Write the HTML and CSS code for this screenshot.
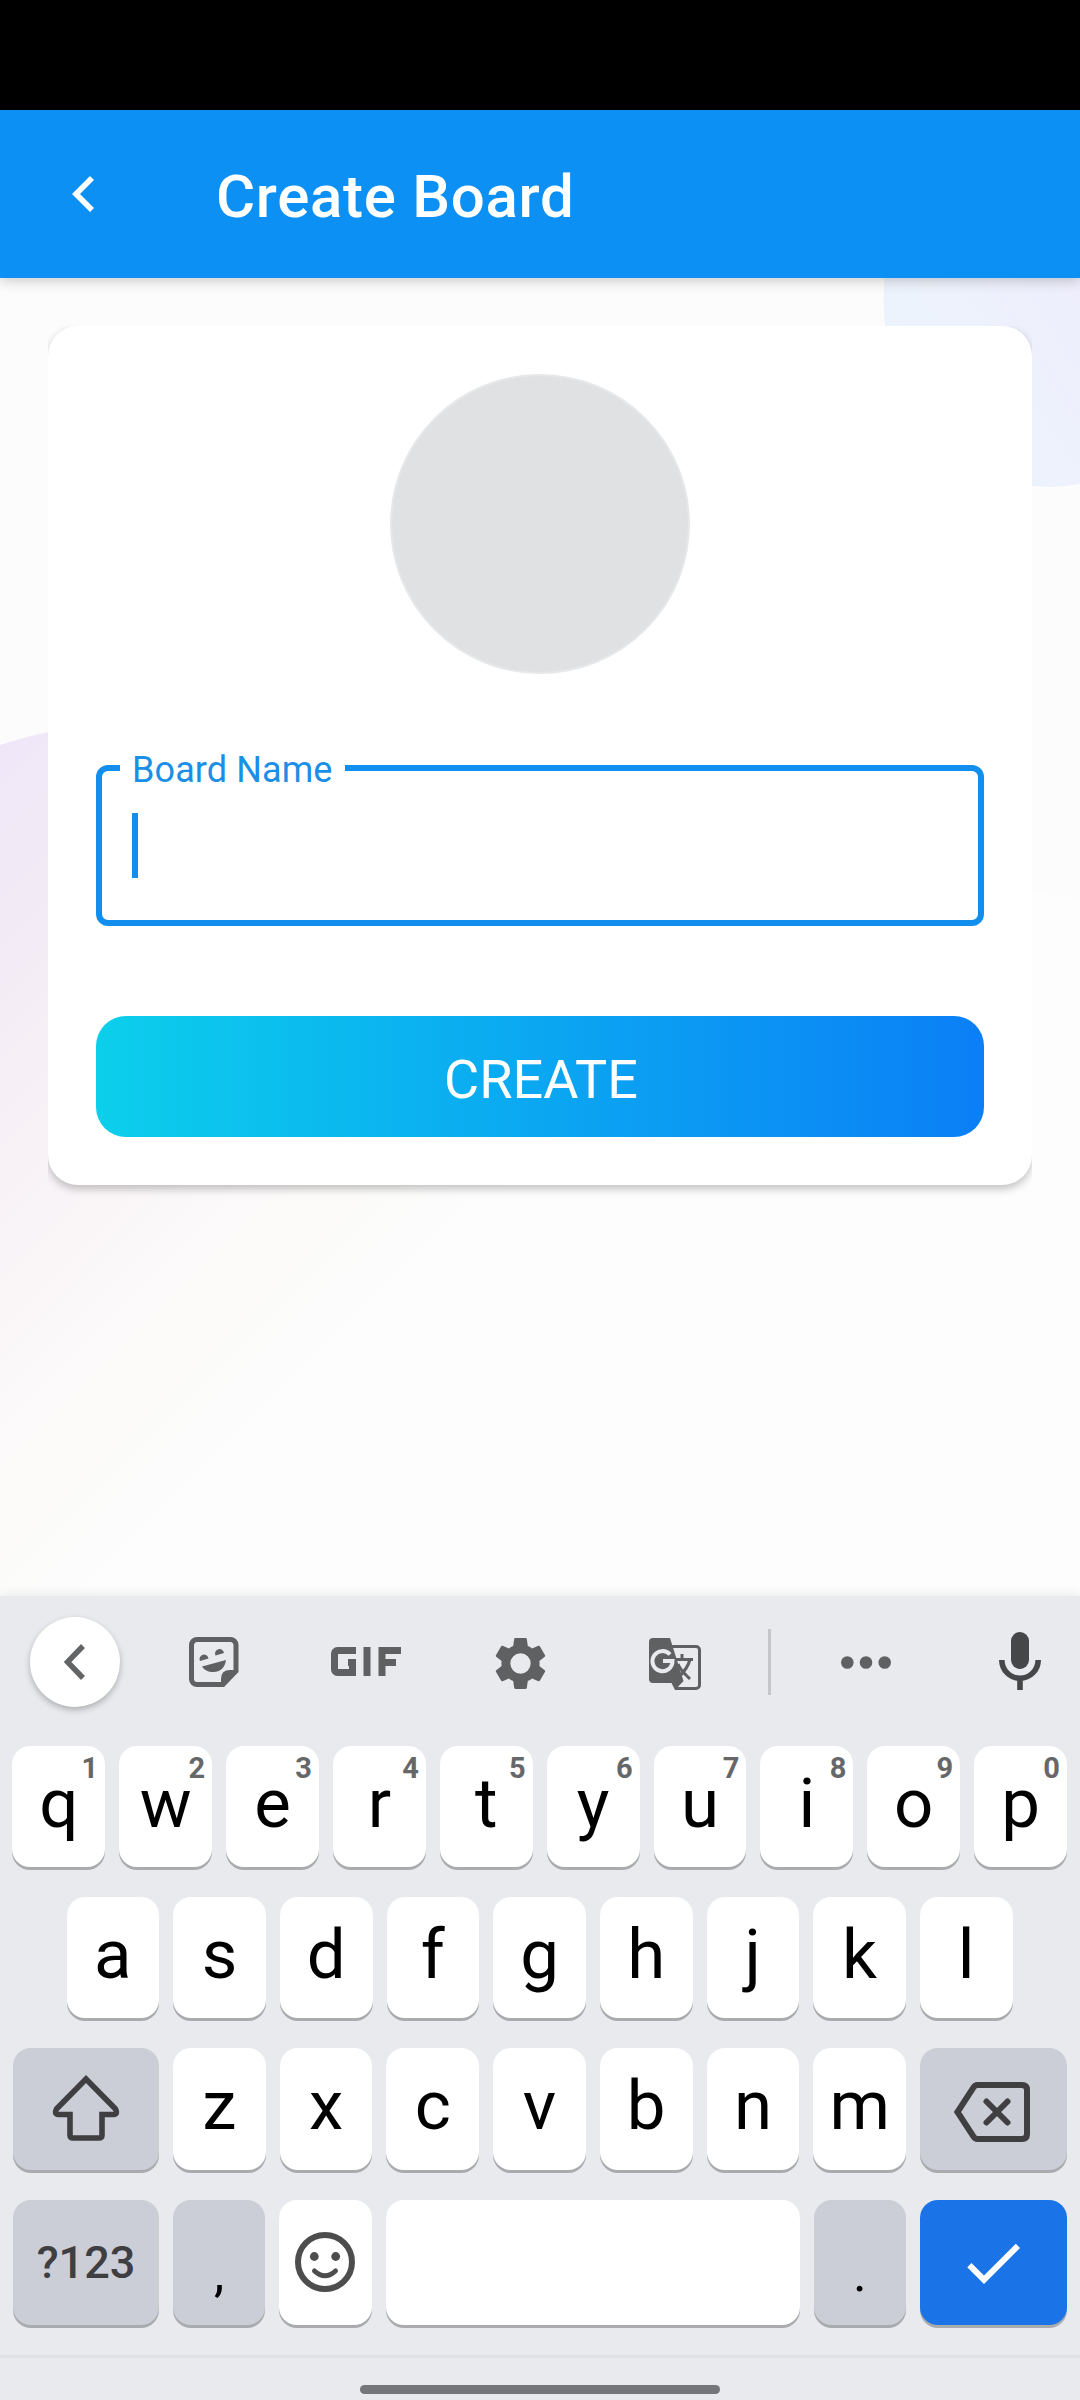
FILE: index.html
```html
<!DOCTYPE html>
<html lang="en">
<head>
<meta charset="utf-8">
<title>Create Board</title>
<link rel="stylesheet" href="styles.css">
</head>
<body>
<div class="screen">
  <div class="status-bar"></div>
  <header class="app-bar">
    <svg class="back" width="22" height="36" viewBox="0 0 22 36"><path d="M20 2L4 18l16 16" fill="none" stroke="#fff" stroke-width="5.600"/></svg>
    <h1 class="title">Create Board</h1>
  </header>
  <main class="content">
    <svg class="backdrop" width="1080" height="1318" viewBox="0 278 1080 1318">
      <defs>
        <linearGradient id="violet" gradientUnits="userSpaceOnUse" x1="0" y1="732" x2="484" y2="1216">
          <stop offset="0" stop-color="#efe7f8"/><stop offset=".3" stop-color="#f4edf5"/>
          <stop offset=".52" stop-color="#f9f4f7"/><stop offset=".8" stop-color="#fcfbfa"/><stop offset="1" stop-color="#fdfdfd"/>
        </linearGradient>
        <linearGradient id="sky" gradientUnits="userSpaceOnUse" x1="890" y1="420" x2="1080" y2="300">
          <stop offset="0" stop-color="#eaf4fd"/><stop offset=".5" stop-color="#edf2fc"/><stop offset="1" stop-color="#eeeefc"/>
        </linearGradient>
      </defs>
      <path d="M0 745Q24 737 48 732L200 715 1080 900V1596H0z" fill="url(#violet)"/>
      <ellipse cx="1049" cy="300" rx="165.500" ry="187" fill="url(#sky)"/>
    </svg>
    <section class="card">
      <div class="avatar"></div>
      <div class="field">
        <span class="label">Board Name</span>
        <span class="caret"></span>
      </div>
      <button class="create">CREATE</button>
    </section>
  </main>
  <section class="keyboard">
    <div class="toolbar">
      <span class="tool-back"><svg width="22" height="36" viewBox="0 0 22 36"><path d="M19 2L3.500 18 19 34" fill="none" stroke="#636466" stroke-width="5.500"/></svg></span>
      <svg class="sticker" width="50" height="50" viewBox="0 0 50 50">
        <path d="M8 2.500h33.500a5.500 5.500 0 0 1 5.500 5.500v26L34 47.500H8A5.500 5.500 0 0 1 2.500 42V8A5.500 5.500 0 0 1 8 2.500z" fill="none" stroke="#5f6062" stroke-width="5"/>
        <path d="M32 49V42q0-9 9-9h8L33 49zM11 24a4.500 4.500 0 1 1 8.500-2.500zM26.500 18.500a4.500 4.500 0 1 1 8.500-2.500zM13 29.500L37 23C36 31 31 35 24.500 35 19 35 15 33 13 29.500z" fill="#5f6062"/>
      </svg>
      <svg class="gif" width="70" height="29" viewBox="0 0 70 29" fill="none" stroke="#5f6062" stroke-width="7">
        <path d="M25 3.500H6.500a3 3 0 0 0-3 3v16a3 3 0 0 0 3 3h15v-10H17"/><path d="M36 0v29M51 29V3.500h19M51 15.500h14"/>
      </svg>
      <svg class="gear" width="61" height="61" viewBox="0 0 24 24"><path fill="#5f6062" d="M19.430 12.980c.04-.32.07-.64.07-.98s-.03-.66-.07-.98l2.110-1.650c.19-.15.24-.42.12-.64l-2-3.460c-.12-.22-.39-.3-.61-.22l-2.490 1c-.52-.4-1.080-.73-1.690-.98l-.38-2.650C14.460 2.180 14.250 2 14 2h-4c-.25 0-.46.18-.49.42l-.38 2.650c-.61.25-1.170.59-1.690.98l-2.490-1c-.23-.09-.49 0-.61.22l-2 3.460c-.13.22-.07.49.12.64l2.110 1.650c-.04.32-.07.65-.07.98s.03.66.07.98l-2.110 1.650c-.19.15-.24.42-.12.64l2 3.460c.12.22.39.3.61.22l2.490-1c.52.4 1.080.73 1.690.98l.38 2.650c.03.24.24.42.49.42h4c.25 0 .46-.18.49-.42l.38-2.650c.61-.25 1.170-.59 1.690-.98l2.490 1c.23.09.49 0 .61-.22l2-3.460c.12-.22.07-.49-.12-.64l-2.110-1.650zM12 16a4 4 0 1 1 0-8 4 4 0 0 1 0 8z"/></svg>
      <svg class="translate" width="52" height="52" viewBox="0 0 52 52">
        <path d="M22 8.500h25a3.500 3.500 0 0 1 3.500 3.500v35a3.500 3.500 0 0 1-3.500 3.500H26" fill="none" stroke="#5f6062" stroke-width="3"/>
        <path d="M4 0h17l13.500 43L26 52l-3.500-7H4a4 4 0 0 1-4-4V4a4 4 0 0 1 4-4z" fill="#5f6062"/>
        <path d="M27 21.500h17M33 16v5.500M41 21.500C39 29 35 34 30 39M29 26c2 6 7 10 12 15" fill="none" stroke="#5f6062" stroke-width="3"/>
        <path d="M21 16.500a10 10 0 1 0 2.500 6.500H14" fill="none" stroke="#e8eaed" stroke-width="4"/>
      </svg>
      <span class="rule"></span>
      <svg class="dots" width="50" height="13" viewBox="0 0 50 13" fill="#5f6062"><circle cx="6.300" cy="6.500" r="6.300"/><circle cx="25" cy="6.500" r="6.300"/><circle cx="43.700" cy="6.500" r="6.300"/></svg>
      <svg class="mic" width="42" height="58" viewBox="0 0 42 58"><rect x="12" y="0" width="18" height="37" rx="9" fill="#464749"/><path d="M2.800 28a18.200 18.200 0 0 0 36.400 0M21 46v12" fill="none" stroke="#464749" stroke-width="5.600"/></svg>
    </div>
    <div class="row first">
      <kbd class="key">q<sup>1</sup></kbd><kbd class="key">w<sup>2</sup></kbd><kbd class="key">e<sup>3</sup></kbd><kbd class="key">r<sup>4</sup></kbd><kbd class="key">t<sup>5</sup></kbd><kbd class="key">y<sup>6</sup></kbd><kbd class="key">u<sup>7</sup></kbd><kbd class="key">i<sup>8</sup></kbd><kbd class="key">o<sup>9</sup></kbd><kbd class="key">p<sup>0</sup></kbd>
    </div>
    <div class="row inset">
      <kbd class="key">a</kbd><kbd class="key">s</kbd><kbd class="key">d</kbd><kbd class="key">f</kbd><kbd class="key">g</kbd><kbd class="key">h</kbd><kbd class="key">j</kbd><kbd class="key">k</kbd><kbd class="key">l</kbd>
    </div>
    <div class="row third">
      <kbd class="key wide grey"><svg class="shift" width="68" height="66" viewBox="0 0 68 66"><path d="M34 4L4.500 34Q2 39 6 39.500H18V60q0 3 3 3H47q3 0 3-3V39.500H62Q66 39 63.500 34z" fill="none" stroke="#3f3f41" stroke-width="5.600"/></svg></kbd>
      <kbd class="key">z</kbd><kbd class="key">x</kbd><kbd class="key">c</kbd><kbd class="key">v</kbd><kbd class="key">b</kbd><kbd class="key">n</kbd><kbd class="key">m</kbd>
      <kbd class="key wide grey"><svg class="delete" width="76" height="60" viewBox="0 0 76 60" fill="none" stroke="#3f3f41"><path d="M23.500 3H68q5 0 5 5V52q0 5-5 5H23.500q-2.500 0-4-2.500L3.500 30 19.500 5.500Q21 3 23.500 3z" stroke-width="6"/><path d="M32.500 19.500l21 21m0-21l-21 21" stroke-width="6" stroke-linecap="round"/></svg></kbd>
    </div>
    <div class="row fourth">
      <kbd class="key wide grey mode">?123</kbd>
      <kbd class="key grey punct">,</kbd>
      <kbd class="key emoji"><svg width="60" height="60" viewBox="0 0 60 60"><g fill="none" stroke="#4d4d4e"><circle cx="30" cy="30" r="27" stroke-width="6"/><path d="M19.500 39q10.500 9.500 21 0" stroke-width="5" stroke-linecap="round"/></g><g fill="#4d4d4e"><circle cx="19.300" cy="24.500" r="4.400"/><circle cx="40.700" cy="24.500" r="4.400"/></g></svg></kbd>
      <kbd class="key space"></kbd>
      <kbd class="key grey punct">.</kbd>
      <kbd class="key wide enter"><svg width="72" height="72" viewBox="0 0 24 24"><path fill="#fff" d="M9 16.170L4.830 12l-1.420 1.410L9 19 21 7l-1.410-1.410z"/></svg></kbd>
    </div>
    <footer class="nav"><span class="pill"></span></footer>
  </section>
</div>
</body>
</html>
```
FILE: styles.css
```css
* { box-sizing: border-box; }
body { margin: 0; font-family: Roboto, "Liberation Sans", sans-serif; }
svg { display: block; flex: none; }

.screen { width: 1080px; height: 2400px; display: flex; flex-direction: column; overflow: hidden; background: #fcfcfc; }
.status-bar { height: 110px; background: #000; }

.app-bar { height: 168px; display: flex; align-items: center; padding-left: 72px; background: #0d90f3; box-shadow: 0 3px 12px rgba(0,0,0,.2); position: relative; z-index: 2; }
.title { margin: 5px 0 0 122px; font-size: 60px; line-height: 70px; font-weight: 500; letter-spacing: .7px; color: #fff; }

.content { height: 1318px; padding: 48px; position: relative; background: #fcfcfc; }
.backdrop { position: absolute; left: 0; top: 0; }
.card { position: relative; height: 859px; padding: 48px; border-radius: 30px; background: #fff; box-shadow: 0 4px 8px rgba(0,0,0,.24); clip-path: inset(0 0 -20px 0); }
.avatar { width: 300px; height: 300px; margin: 0 auto; border-radius: 50%; background: #e0e1e3; border: 2px solid #e6e8e9; }
.field { height: 161px; margin-top: 91px; padding: 42px 30px; border: 6px solid #128fee; border-radius: 12px; position: relative; }
.label { position: absolute; left: 18px; top: -22px; width: 225px; padding-left: 12px; background: #fff; color: #1b8fe6; font-size: 36px; line-height: 42px; letter-spacing: .1px; white-space: nowrap; }
.caret { display: block; width: 6px; height: 65px; background: #128fee; }
.create { display: block; width: 100%; height: 121px; margin-top: 90px; padding: 5px 0 0 2px; border: 0; border-radius: 30px; background: linear-gradient(90deg, #0ccfeb, #0bb3f0 35%, #0b7ff6); color: #fff; font: 400 54px/63px Roboto, "Liberation Sans", sans-serif; }

.keyboard { height: 804px; position: relative; background: #e8eaed; box-shadow: 0 0 12px rgba(0,0,0,.1); display: flex; flex-direction: column; gap: 30px; }
.toolbar { height: 120px; padding: 12px 39px 0 30px; display: flex; align-items: center; }
.tool-back { width: 90px; height: 90px; border-radius: 50%; background: #fff; box-shadow: 0 3px 6px rgba(0,0,0,.25); display: flex; align-items: center; justify-content: center; }
.sticker { margin-left: 69px; }
.gif { margin-left: 92px; margin-top: -2px; }
.gear { margin-left: 89px; margin-top: 3px; }
.translate { margin-left: 98px; margin-top: 4px; }
.rule { width: 3px; height: 66px; margin-left: 67px; background: #c4c6ca; }
.dots { margin-left: 70px; }
.mic { margin-left: 108px; margin-top: -3px; }

.row { height: 121px; padding: 0 13px; display: flex; gap: 14px; }
.first { padding-left: 12.4px; }
.inset { padding: 0 67.5px 0 66.5px; }
.third { height: 122px; }
.fourth { height: 125px; }
.key { flex: 1 1 0; position: relative; border-radius: 18px; background: #fff; box-shadow: 0 3px 0 #a9abae; display: flex; align-items: center; justify-content: center; font: 400 69px/80px Roboto, "Liberation Sans", sans-serif; color: #000; padding-bottom: 6px; }
.key sup { position: absolute; right: 7px; top: 5px; font-size: 29px; line-height: 34px; font-weight: 700; color: #666769; }
.wide { flex: 0 0 146px; }
.wide:last-child { flex-basis: 147px; }
.wide, .emoji { padding-bottom: 0; }
.shift { margin-top: -3px; }
.delete { margin: 6px 3px 0 0; }
.emoji svg { margin-top: -1px; }
.space { flex: 0 0 414px; }
.grey { background: #cbced6; }
.mode { font-size: 45px; font-weight: 500; color: #3f3f41; padding-top: 1px; }
.punct { font-size: 52px; padding: 22px 0 0; }
.enter { background: #1b73e8; }
.nav { height: 45px; border-top: 3px solid #dee0e1; padding-top: 27px; }
.pill { display: block; width: 360px; height: 9px; margin: 0 auto; border-radius: 5px; background: #757679; }
```
